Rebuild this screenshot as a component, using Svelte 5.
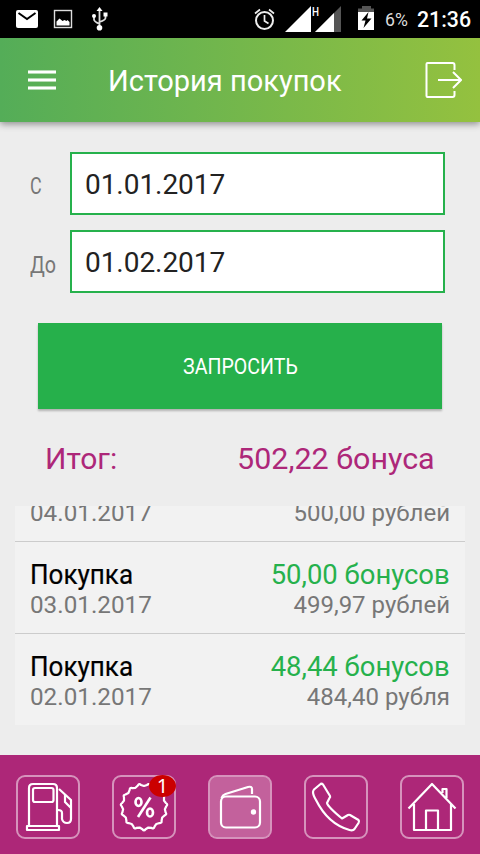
<script>
  const purchases = [
    { date: '04.01.2017', sum: '500,00 рублей' },
    { title: 'Покупка', date: '03.01.2017', bonus: '50,00 бонусов', sum: '499,97 рублей' },
    { title: 'Покупка', date: '02.01.2017', bonus: '48,44 бонусов', sum: '484,40 рубля' }
  ];
  // Outline of the scalloped discount seal
  const at = (deg, r) => {
    const a = ((deg - 90) * Math.PI) / 180;
    return `${(32 + r * Math.cos(a)).toFixed(2)} ${(32 + r * Math.sin(a)).toFixed(2)}`;
  };
  const seal = Array.from({ length: 15 }, (_, i) => {
    const d = i * 24;
    return `${i ? 'L' : 'M'}${at(d, 21)}L${at(d + 8, 22.3)}Q${at(d + 12, 24.4)} ${at(d + 16, 22.3)}`;
  }).join('') + 'Z';
</script>

<div class="screen">
  <div class="status">
    <svg width="480" height="38" viewBox="0 0 480 38">
      <rect x="16" y="10" width="22" height="18" rx="2" fill="#fff" />
      <path d="M18.500 13l8.500 6 8.500-6" fill="none" stroke="#000" stroke-width="2" />
      <rect x="54.500" y="10.500" width="17" height="17" fill="none" stroke="#ddd" stroke-width="1.400" />
      <path d="M56.500 25.500v-4l3-3 3 2.500 2-1 2 1 1-1 2 2v3.500z" fill="#fff" />
      <g fill="none" stroke="#ddd" stroke-width="1.800">
        <path d="M99.500 27V10M94 16v3.500q0 2 5.500 4.500M105.500 15v3q0 2-6 4" />
      </g>
      <g fill="#fff"><circle cx="99.500" cy="27.800" r="2.800" /><circle cx="94" cy="16" r="2" /><path d="M103.500 12.500h4v4h-4zM99.500 7l3 4h-6z" /></g>
      <g fill="none" stroke="#eee" stroke-width="2">
        <circle cx="264.500" cy="20.500" r="8.500" /><path d="M264.500 15v6l4 2.500M255 13.500l5-4M274 13.500l-5-4" stroke-width="1.700" />
      </g>
      <path d="M285 32L311 6v26z" fill="#fff" />
      <path d="M315 32L341 6v26z" fill="#555" />
      <path d="M315 32l19-19v19z" fill="#fff" />
      <path d="M311 5h10v12h-10z" fill="#000" />
      <path d="M358 8.500h4V6h9v2.500h3V13h-16z" fill="#555" /><path d="M358 12h16v18h-16z" fill="#fff" />
      <path d="M368.500 12l-7 8.500h4l-2 7.500 8-9.500h-4.500z" fill="#000" />
    </svg>
    <span class="net">H</span><span class="battery">6%</span><span class="clock">21:36</span>
  </div>

  <header>
    <div class="burger"><i></i><i></i><i></i></div>
    <h1>История покупок</h1>
    <svg width="38" height="38" viewBox="0 0 38 38" fill="none" stroke="#fff" stroke-width="2">
      <path d="M30.500 9V4q0-2-2-2h-25q-1 0-1 1v32q0 1 1 1h25q2 0 2-2v-4M14 19h23M29 11l8 8-8 8" />
    </svg>
  </header>

  <main>
    <form>
      <label><span class="c">С</span><div class="field"><b>01.01.2017</b></div></label>
      <label><span class="do">До</span><div class="field"><b>01.02.2017</b></div></label>
      <button type="button"><span>ЗАПРОСИТЬ</span></button>
    </form>
    <div class="total"><span>Итог:</span><span class="amount">502,22 бонуса</span></div>
    <div class="list">
      {#each purchases as p}
        <div class="row">
          <div>{#if p.title}<div class="name">{p.title}</div>{/if}<div class="sub date">{p.date}</div></div>
          <div class="right">{#if p.bonus}<div class="bonus">{p.bonus}</div>{/if}<div class="sub">{p.sum}</div></div>
        </div>
      {/each}
    </div>
  </main>

  <nav>
    <div class="tile">
      <svg viewBox="0 0 64 64">
        <path d="M13 50V13q0-4 4-4h20q4 0 4 4v37" /><rect x="17" y="13" width="20.500" height="14" rx="2" /><path d="M11 51h32v4H11zM43 14l12 11v19q0 4-4 4t-5-4v-6q0-3-4-3M49 20v7l6 6" />
      </svg>
    </div>
    <div class="tile">
      <svg viewBox="0 0 64 64"><path d={seal} /><g stroke-width="2.600"><ellipse cx="26.500" cy="27" rx="3" ry="4" /><ellipse cx="38" cy="37.500" rx="3" ry="4" /><path d="M38.500 22.500L26 42" /></g></svg>
      <span class="badge">1</span>
    </div>
    <div class="tile active">
      <svg viewBox="0 0 64 64">
        <rect x="13" y="21.500" width="39" height="31" rx="5" /><path d="M13.500 23q1-3 4-4l22.500-7q4-1 4 2v5" /><circle cx="45.500" cy="37" r="2.700" fill="#fff" stroke="none" />
      </svg>
    </div>
    <div class="tile">
      <svg viewBox="0 0 64 64"><path d="M9 17q0-1 1-2.500l6-5q1.500-1.500 3 0L26 21q.5 1-.5 2l-2.500 5q1 4 15 15.500l6-3.500q1-.5 2 0L54.500 45q1 1 0 3L50.500 54q-1.500 2-5 1Q24 49 12 25q-3-5-3-8z" /></svg>
    </div>
    <div class="tile">
      <svg viewBox="0 0 64 64"><path d="M8.500 33.500L32 9l23.500 24.500M14 29v26h37V29M26 55V35.500h12V55M42.500 18v-4h4V23" /></svg>
    </div>
  </nav>
</div>

<style>
  :global(body) { margin: 0; background: #ededed; }
  * { box-sizing: border-box; }
  .screen { width: 480px; height: 854px; display: flex; flex-direction: column; overflow: hidden; background: #ededed; font-family: Roboto, "Noto Sans", sans-serif; }
  .status { position: relative; height: 38px; flex: none; background: #000; color: #fff; }
  .status svg { display: block; }
  .status span { position: absolute; white-space: nowrap; }
  .net { left: 312px; top: 5px; font-size: 13px; line-height: 13px; transform: scaleX(.76); transform-origin: left; font-weight: 500; }
  .battery { left: 385px; top: 9px; font-size: 18px; line-height: 22px; color: #ddd; transform: scaleX(.98); transform-origin: left; }
  .clock { left: 417px; top: 8px; font-size: 21.300px; line-height: 24px; font-weight: 500; }
  header { position: relative; z-index: 1; height: 84px; flex: none; display: flex; align-items: center; padding: 0 18px 0 28px; background: linear-gradient(90deg, #54ad58, #94c13f); box-shadow: 0 2px 7px rgba(0,0,0,.42); color: #fff; }
  .burger { display: grid; gap: 4px; width: 28px; margin-right: 52px; }
  .burger i { height: 4px; background: linear-gradient(rgba(255,255,255,.55) 1px, #fff 1px, #fff 3px, rgba(255,255,255,.55) 3px); }
  h1 { margin: 0; font-size: 30px; line-height: 40px; font-weight: 400; white-space: nowrap; flex: 1; padding-top: 1px; transform: scaleX(.967); transform-origin: left; }
  main { height: 633px; flex: none; }
  form { padding: 30px 35px 0 30px; }
  label { display: flex; align-items: center; height: 63px; margin-bottom: 15px; color: #777; font-size: 24px; }
  label > span { width: 40px; padding-top: 6px; transform-origin: left; }
  .c { transform: scaleX(.78); font-size: 23px; }
  .do { transform: scaleX(.82); }
  .field { flex: 1; height: 63px; border: 2px solid #26b14c; background: #fff; padding: 0 13px; color: #222; font-size: 28px; line-height: 61px; }
  b { font-weight: 400; letter-spacing: -.05px; }
  button { display: block; width: 404px; height: 86px; margin: 30px 0 0 8px; border: 0; background: #26b04b; box-shadow: 0 2px 2px rgba(0,0,0,.25); color: #fff; font: 22px Roboto, sans-serif; }
  button span { display: inline-block; transform: scaleX(.89); }
  .total { height: 97px; padding: 2px 45px 0; display: flex; align-items: center; justify-content: space-between; color: #ad2779; font-size: 30px; }
  .amount { transform: scaleX(1.015); transform-origin: right; }
  .list { height: 219px; margin: 0 15px; overflow: hidden; background: #f2f2f2; display: flex; flex-direction: column; justify-content: flex-end; }
  .row { height: 92px; flex: none; padding: 16px 15px 0; display: flex; justify-content: space-between; border-bottom: 1px solid #ccc; white-space: nowrap; }
  .row:first-child { height: 36px; padding-top: 0; align-items: flex-end; padding-bottom: 14px; }
  .row:last-child { border: 0; height: 91px; }
  .name, .bonus { font-size: 28px; line-height: 34px; color: #000; }
  .name { transform: scaleX(.93); transform-origin: left; -webkit-text-stroke: .2px; }
  .bonus { color: #26b14c; transform: scaleX(.98); transform-origin: right; }
  .sub { font-size: 24px; line-height: 27px; color: #777; }
  .date { transform: scaleX(1.01); transform-origin: left; }
  .right { text-align: right; }
  nav { height: 99px; flex: none; padding: 20px 16px 0; display: flex; gap: 32px; background: #ad2778; }
  .tile { position: relative; width: 64px; height: 64px; border-radius: 9px; border: 2px solid rgba(255,255,255,.5); }
  .tile svg { display: block; width: 64px; height: 64px; margin: -2px; fill: none; stroke: #fff; stroke-width: 2.200; stroke-linejoin: round; }
  .active { background: rgba(255,255,255,.27); background-clip: padding-box; }
  .badge { position: absolute; right: -2px; top: -2px; width: 27px; height: 22px; border-radius: 50%; background: #cb0000; color: #fff; font: 20px/22px "Noto Sans", sans-serif; text-align: center; }
</style>
